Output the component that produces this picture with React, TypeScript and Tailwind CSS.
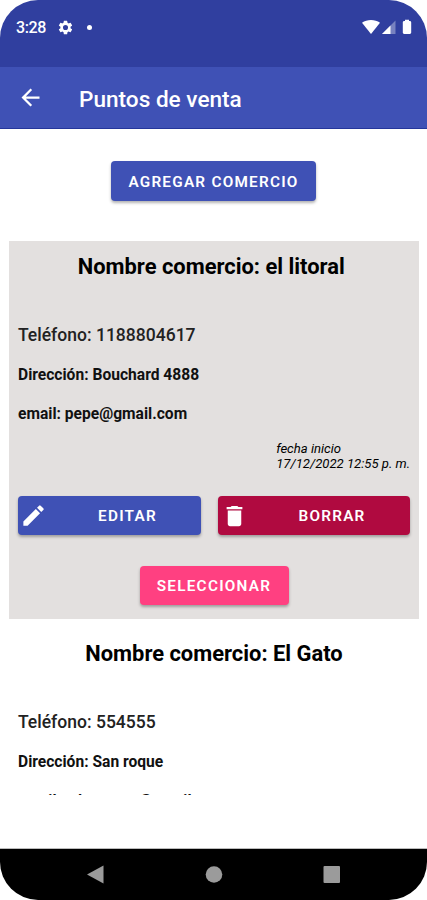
import type { ReactNode } from 'react';

interface Store {
    name: string;
    phone: string;
    address: string;
    email: string;
    date: string;
    selected: boolean;
}

const stores: Store[] = [
    {
        name: 'el litoral\u00a0',
        phone: '1188804617',
        address: 'Bouchard 4888',
        email: 'pepe@gmail.com',
        date: '17/12/2022 12:55 p. m.',
        selected: true,
    },
    {
        name: 'El Gato',
        phone: '554555',
        address: 'San roque',
        email: 'edgaranos@gmail.com',
        date: '',
        selected: false,
    },
];

function StatusBar() {
    return (
        <div className="flex h-[67px] shrink-0 items-start bg-[#303f9f] pt-[18px] pr-[14px] pl-[16px] text-white">
            <span className="w-[41px] text-[16px] leading-[20px] font-medium tracking-[-0.4px]">3:28</span>
            {/* Settings */}
            <svg className="mt-[1px] h-[17px] w-[17px]" viewBox="0 0 24 24" fill="currentColor">
                <path d="M19.14 12.94c.04-.3.06-.61.06-.94 0-.32-.02-.64-.07-.94l2.03-1.58a.49.49 0 0 0 .12-.61l-1.92-3.32a.49.49 0 0 0-.59-.22l-2.39.96c-.5-.38-1.03-.7-1.62-.94l-.36-2.54a.48.48 0 0 0-.48-.41h-3.84c-.24 0-.43.17-.47.41l-.36 2.54c-.59.24-1.13.57-1.62.94l-2.39-.96a.48.48 0 0 0-.59.22L2.74 8.87a.48.48 0 0 0 .12.61l2.03 1.58c-.05.3-.09.63-.09.94s.02.64.07.94l-2.03 1.58a.49.49 0 0 0-.12.61l1.92 3.32c.12.22.37.29.59.22l2.39-.96c.5.38 1.03.7 1.62.94l.36 2.54c.05.24.24.41.48.41h3.84c.24 0 .44-.17.47-.41l.36-2.54c.59-.24 1.13-.56 1.62-.94l2.39.96c.22.08.47 0 .59-.22l1.92-3.32a.48.48 0 0 0-.12-.61zM12 15.6a3.6 3.6 0 1 1 0-7.2 3.6 3.6 0 0 1 0 7.2z" />
            </svg>
            <span className="mt-[7px] ml-[13px] h-[5px] w-[5px] rounded-full bg-white" />
            {/* Wifi, signal and battery */}
            <svg className="mt-[1px] ml-auto h-[17px] w-[52px]" viewBox="0 0 52 17" fill="currentColor">
                <path d="M1 3.8C6 .2 14 .2 19 3.800L10 15z" />
                <path d="M34.500 1.500V15H21z" opacity="0.35" />
                <path d="M29.500 6.500V15H21z" />
                <path d="M44 .8h4V2h.8c.8 0 1.400.6 1.400 1.400v10.200c0 .8-.6 1.400-1.400 1.400h-5.600c-.8 0-1.400-.6-1.400-1.400V3.400c0-.8.6-1.400 1.400-1.400H44z" />
            </svg>
        </div>
    );
}

function ActionButton({ className, icon, children }: { className: string; icon?: ReactNode; children: ReactNode }) {
    return (
        <button
            className={`flex h-[39px] items-center rounded-[4px] text-[15.3px] font-semibold tracking-[1.25px] text-white shadow-[0_2px_3px_rgba(0,0,0,0.3)] ${className}`}
        >
            {icon}
            <span className="flex-1 pt-[2px] text-center">{children}</span>
        </button>
    );
}

function StoreCard({ store }: { store: Store }) {
    return (
        <div className={`flex h-[378px] shrink-0 flex-col px-[9px] text-black ${store.selected ? 'bg-[#e3e0df]' : 'bg-white'}`}>
            <h2 className="mt-[12px] text-center text-[21.9px] leading-[28px] font-bold">
                Nombre comercio: {store.name}
            </h2>
            <p className="mt-[42px] text-[17.55px] leading-[24px] font-medium text-[#222]">Teléfono: {store.phone}</p>
            <p className="mt-[18px] text-[15.6px] leading-[20px] font-bold text-[#111]">Dirección: {store.address}</p>
            <p className="mt-[19px] text-[15.6px] leading-[20px] font-bold text-[#111]">email: {store.email}</p>
            <div className="mt-[17px] h-[30px] self-end text-[13.1px] leading-[15px] italic">
                <p>fecha inicio</p>
                <p>{store.date}</p>
            </div>
            <div className="mt-[25px] flex gap-[17px]">
                <ActionButton
                    className="w-[183px] bg-[#3f51b5] pl-[2px]"
                    icon={
                        <svg className="mr-[7px] h-[27px] w-[27px]" viewBox="0 0 24 24" fill="currentColor">
                            <path d="M3 17.25V21h3.75L17.81 9.94l-3.75-3.75L3 17.25zM20.71 7.04a1 1 0 0 0 0-1.41l-2.34-2.34a1 1 0 0 0-1.41 0l-1.83 1.83 3.75 3.75 1.83-1.83z" />
                        </svg>
                    }
                >
                    EDITAR
                </ActionButton>
                <ActionButton
                    className="w-[192px] bg-[#b00a40] pl-[3px]"
                    icon={
                        <svg className="mr-[6px] h-[28px] w-[27px]" viewBox="0 0 24 24" fill="currentColor">
                            <path d="M6 19c0 1.1.9 2 2 2h8c1.1 0 2-.9 2-2V7H6v12zM19 4h-3.500l-1-1h-5l-1 1H5v2h14V4z" />
                        </svg>
                    }
                >
                    BORRAR
                </ActionButton>
            </div>
            <ActionButton className="mt-[31px] w-[149px] self-center bg-[#ff4081]">SELECCIONAR</ActionButton>
        </div>
    );
}

export default function App() {
    return (
        <div className="flex h-[900px] w-[427px] flex-col overflow-hidden rounded-[38px] bg-white font-['Roboto',sans-serif]">
            <StatusBar />

            {/* Toolbar */}
            <header className="flex h-[62px] shrink-0 items-center border-b border-[#24369b] bg-[#3f51b5] pl-[17px] text-white">
                <svg className="h-[27px] w-[27px]" viewBox="0 0 24 24" fill="currentColor">
                    <path d="M20 11H7.83l5.59-5.59L12 4l-8 8 8 8 1.41-1.41L7.83 13H20v-2z" />
                </svg>
                <h1 className="ml-[35px] pt-[5px] text-[22.6px] font-medium">Puntos de venta</h1>
            </header>

            <main className="flex min-h-0 flex-1 flex-col">
                <ActionButton className="mt-[32px] h-[40px] w-[205px] shrink-0 self-center bg-[#3f51b5]">AGREGAR COMERCIO</ActionButton>
                {/* Store list */}
                <div className="mt-[40px] flex h-[554px] flex-col gap-[9px] overflow-hidden pr-[8px] pl-[9px]">
                    {stores.map((store) => (
                        <StoreCard key={store.name} store={store} />
                    ))}
                </div>
            </main>

            {/* Navigation bar */}
            <nav className="flex h-[52px] shrink-0 items-center border-t border-[#bbb] bg-black text-[#9b9b9b]">
                <svg className="h-[20px] w-full" viewBox="0 0 427 20" fill="currentColor">
                    <path d="M87 9.500L103.500.5v18z" />
                    <circle cx="214" cy="9.500" r="8.300" />
                    <rect x="323.500" y="1" width="16.500" height="17" rx="1" />
                </svg>
            </nav>
        </div>
    );
}
